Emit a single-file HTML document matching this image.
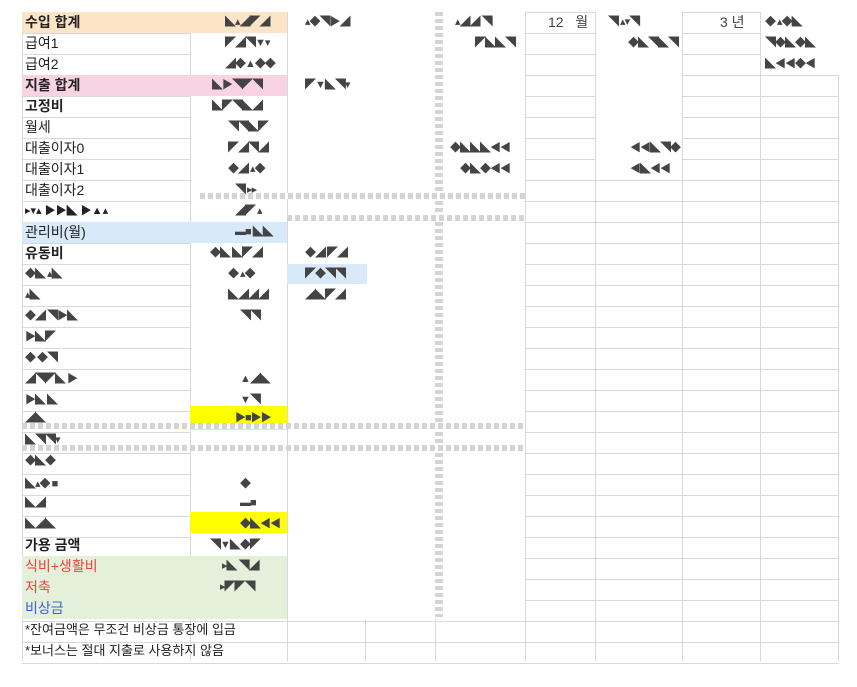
<!DOCTYPE html>
<html><head><meta charset="utf-8"><style>
body{margin:0;width:857px;height:687px;background:#fff;position:relative;overflow:hidden;font-family:"Liberation Sans","Noto Sans CJK KR",sans-serif;}
.a{position:absolute;z-index:1}
.t{position:absolute;z-index:3;font-size:14px;line-height:21px;color:#222;left:25px;white-space:nowrap}
.b{font-weight:bold}
.h{position:absolute;z-index:0;height:1px;background:#d9d9d9}
.v{position:absolute;z-index:0;width:1px;background:#d9d9d9}
.g{position:absolute;z-index:3;font-size:11px;line-height:21px;color:#444;letter-spacing:-1px;white-space:nowrap}
</style></head><body>
<div id="grid"></div>
<script>
var s='';
function H(x1,x2,y){s+='<div class="h" style="left:'+x1+'px;width:'+(x2-x1+1)+'px;top:'+y+'px"></div>';}
function V(x,y1,y2){s+='<div class="v" style="left:'+x+'px;top:'+y1+'px;height:'+(y2-y1)+'px"></div>';}
for(var i=0;i<=31;i++){var y=12+i*21;
 if(i>=29){H(22,838,y);continue;}
 H(22,190,y);
 H(525,595,y);
 if(y>=178)H(595,682,y);
 H(682,760,y);
 if(y>=75)H(760,838,y);
}
V(22,12,661);V(190,12,661);V(287,12,661);V(365,619,661);V(435,619,661);V(525,12,661);V(595,12,661);V(682,12,661);V(760,12,661);V(838,75,661);
document.getElementById('grid').innerHTML=s;
</script>
<!-- grey dashed strips -->
<div class="a" style="z-index:2;left:435px;top:12px;width:8px;height:605px;background:repeating-linear-gradient(#d4d4d4 0 4px,#fff 4px 7px)"></div>
<div class="a" style="z-index:2;left:200px;top:193px;width:325px;height:6px;background:repeating-linear-gradient(90deg,#d4d4d4 0 5px,#fff 5px 8px)"></div>
<div class="a" style="z-index:2;left:287px;top:215px;width:238px;height:6px;background:repeating-linear-gradient(90deg,#d4d4d4 0 5px,#fff 5px 8px)"></div>
<div class="a" style="z-index:2;left:22px;top:423px;width:503px;height:6px;background:repeating-linear-gradient(90deg,#d4d4d4 0 5px,#fff 5px 8px)"></div>
<div class="a" style="z-index:2;left:22px;top:445px;width:503px;height:6px;background:repeating-linear-gradient(90deg,#d4d4d4 0 5px,#fff 5px 8px)"></div>
<!-- fills -->
<div class="a" style="left:22px;top:12px;width:265px;height:21px;background:#fce4c6"></div>
<div class="a" style="left:22px;top:75px;width:265px;height:21px;background:#f8d4e2"></div>
<div class="a" style="left:22px;top:222px;width:265px;height:21px;background:#d8e9f9"></div>
<div class="a" style="left:287px;top:264px;width:80px;height:20px;background:#d8e9f9"></div>
<div class="a" style="left:190px;top:406px;width:97px;height:24px;background:#ffff00"></div>
<div class="a" style="left:190px;top:512px;width:97px;height:21px;background:#ffff00"></div>
<div class="a" style="left:22px;top:556px;width:265px;height:63px;background:#e4f0da"></div>
<!-- labels -->
<div class="t b" style="top:12px">수입 합계</div>
<div class="t" style="top:33px">급여1</div>
<div class="t" style="top:54px">급여2</div>
<div class="t b" style="top:75px">지출 합계</div>
<div class="t b" style="top:96px">고정비</div>
<div class="t" style="top:117px">월세</div>
<div class="t" style="top:138px">대출이자0</div>
<div class="t" style="top:159px">대출이자1</div>
<div class="t" style="top:180px">대출이자2</div>
<div class="t" style="top:201px;font-size:11px">▸▾▴ ▶▶◣ ▶▲▴</div>
<div class="t" style="top:222px">관리비(월)</div>
<div class="t b" style="top:243px">유동비</div>
<div class="t" style="top:535px;font-weight:bold">가용 금액</div>
<div class="t" style="top:556px;color:#e8453c">식비+생활비</div>
<div class="t" style="top:577px;color:#e8453c">저축</div>
<div class="t" style="top:598px;color:#3b5fd6">비상금</div>
<div class="t" style="top:619px;font-size:13px">*잔여금액은 무조건 비상금 통장에 입금</div>
<div class="t" style="top:640px;font-size:13px">*보너스는 절대 지출로 사용하지 않음</div>
<div class="g" style="left:548px;top:12px;font-size:14px;letter-spacing:0">12 &nbsp; 월</div>
<div class="g" style="left:720px;top:12px;font-size:14px;letter-spacing:0">3 년</div>
<div id="gl"></div>
<script>
var g='';var items=[
[225,12,'◣▴◢◤◢'],[305,12,'▴◆◥▶◢'],[225,33,'◤◢◥▼▾'],[225,54,'◢◆▲◆◆'],[212,75,'◣▶◥◤◥'],[305,75,'◤▼◣◥▾'],[212,96,'◣◤◥◣◢'],
[228,117,'◥◥◣◤'],[228,138,'◤◢◥◢'],[228,159,'◆◢ ▴◆'],[235,180,'◥ ▸▸'],[235,201,'◢◤ ▴'],[235,222,'▬■ ◣◣'],[210,243,'◆◣ ◣◤◢'],[305,243,'◆◢ ◤◢'],
[228,264,'◆ ▴◆'],[305,264,'◤◆◥◥'],[228,285,'◣◢◢◢'],[305,285,'◢◣◤◢'],[240,306,'◥◥'],[240,369,'▲◢◣'],[240,390,'▼◥'],[235,408,'▶■▶▶'],[240,514,'◆◣◀◀'],
[210,535,'◥▼◣◆◤'],[222,556,'▸◣ ◥◢'],[220,577,'▸◤◤◥'],[240,474,'◆'],[240,493,'▬■'],
[455,12,'▴◢◢ ◥'],[475,33,'◤◣◣◥'],[450,138,'◆◣◣◣◀◀'],[460,159,'◆◣◆◀◀'],[630,138,'◀◀◣◥◆'],[630,159,'◀◣◀◀'],
[608,12,'◥ ▴▾◥'],[628,33,'◆◣◥◣◥'],[765,12,'◆ ▴◆◣'],[765,33,'◥◆◣◆◣'],[765,54,'◣◀◀◆◀'],
[25,264,'◆◣ ▴◣'],[25,285,'▴◣'],[25,306,'◆◢ ◥▶◣'],[25,327,'▶◣◤'],[25,348,'◆ ◆◥'],[25,369,'◢◥◤◣ ▶'],[25,390,'▶◣ ◣'],[25,408,'◢◣'],[25,430,'◣◥◥▾'],[25,451,'◆◣◆'],[25,474,'◣▴◆ ■'],[25,493,'◣◢'],[25,514,'◣◢◣']];
items.forEach(function(it){g+='<div class="g" style="left:'+it[0]+'px;top:'+it[1]+'px">'+it[2]+'</div>';});
document.getElementById('gl').innerHTML=g;
</script>
</body></html>
